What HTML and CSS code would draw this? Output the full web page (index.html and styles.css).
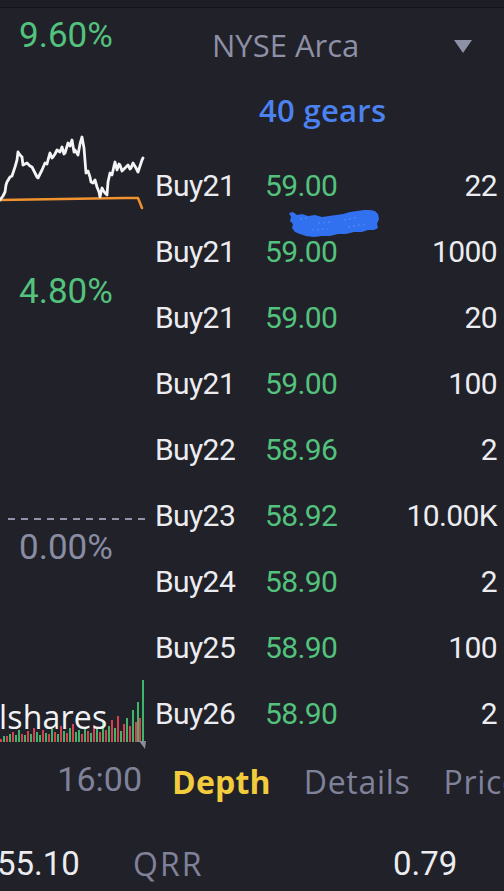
FILE: index.html
```html
<!DOCTYPE html>
<html lang="en">
<head>
<meta charset="utf-8">
<title>Depth</title>
<link rel="stylesheet" href="styles.css">
</head>
<body>
<div class="topbar"></div>
<div class="main">
  <div class="left">
    <div class="pct up first">9.60%</div>
    <svg class="spark" width="150" height="82" viewBox="0 0 150 82">
      <polyline class="avg" points="0,70 125,68 138,68 142,78"/>
      <polyline class="price" points="0,70 3,66 5,62 6,55 7,52 10,47 12,46 13,43 15,37 17,30 18,22 20,25 22,27 23,35 25,34 27,33 30,36 32,37 35,43 37,47 38,48 40,44 42,40 45,33 47,34 48,30 50,23 52,28 53,27 55,24 57,20 60,22 62,17 64,24 65,23 68,13 70,16 72,10 74,22 75,20 78,25 80,14 82,7 84,18 86,43 88,41 90,47 91,52 93,53 95,50 97,57 99,62 100,67 102,58 103,60 105,63 107,65 108,52 110,43 112,45 114,36 115,32 117,40 119,34 120,35 122,41 123,40 126,37 128,35 130,39 131,38 133,33 136,38 138,42 140,36 142,30 143,28"/>
    </svg>
    <div class="pct up second">4.80%</div>
    <div class="dash"></div>
    <div class="pct flat">0.00%</div>
    <div class="vol">
      <svg width="150" height="72" viewBox="0 0 150 72">
        <g class="r">
          <rect x="0" y="61" width="2" height="3"/><rect x="6" y="58" width="2" height="6"/><rect x="12" y="54" width="2" height="10"/>
          <rect x="21" y="56" width="2" height="8"/><rect x="27" y="53" width="2" height="11"/><rect x="33" y="50" width="2" height="14"/>
          <rect x="42" y="52" width="2" height="12"/><rect x="48" y="56" width="2" height="8"/><rect x="54" y="54" width="2" height="10"/>
          <rect x="60" y="48" width="2" height="16"/><rect x="66" y="55" width="2" height="9"/><rect x="72" y="46" width="2" height="18"/>
          <rect x="81" y="56" width="2" height="8"/><rect x="87" y="53" width="2" height="11"/><rect x="93" y="47" width="2" height="17"/>
          <rect x="99" y="54" width="2" height="10"/><rect x="105" y="52" width="2" height="12"/><rect x="111" y="42" width="2" height="22"/>
          <rect x="117" y="38" width="2" height="26"/><rect x="123" y="46" width="2" height="18"/><rect x="129" y="48" width="2" height="16"/>
          <rect x="135" y="44" width="2" height="20"/><rect x="139" y="40" width="2" height="24"/>
        </g>
        <g class="g">
          <rect x="3" y="58" width="2" height="6"/><rect x="9" y="56" width="2" height="8"/><rect x="15" y="57" width="2" height="7"/>
          <rect x="18" y="52" width="2" height="12"/><rect x="24" y="57" width="2" height="7"/><rect x="30" y="56" width="2" height="8"/>
          <rect x="36" y="54" width="2" height="10"/><rect x="39" y="57" width="2" height="7"/><rect x="45" y="55" width="2" height="9"/>
          <rect x="51" y="51" width="2" height="13"/><rect x="57" y="56" width="2" height="8"/><rect x="63" y="53" width="2" height="11"/>
          <rect x="69" y="50" width="2" height="14"/><rect x="75" y="54" width="2" height="10"/><rect x="78" y="52" width="2" height="12"/>
          <rect x="84" y="49" width="2" height="15"/><rect x="90" y="55" width="2" height="9"/><rect x="96" y="51" width="2" height="13"/>
          <rect x="102" y="44" width="2" height="20"/><rect x="108" y="48" width="2" height="16"/><rect x="114" y="50" width="2" height="14"/>
          <rect x="120" y="53" width="2" height="11"/><rect x="126" y="40" width="2" height="24"/><rect x="132" y="32" width="2" height="32"/>
          <rect x="137" y="24" width="2" height="40"/><rect x="142" y="2" width="2" height="62"/>
        </g>
        <polygon class="tip" points="139,63 146,63 145,71"/>
      </svg>
      <span class="vol-label">lshares</span>
    </div>
    <div class="time">16:00</div>
  </div>

  <div class="right">
    <div class="exch">
      <span>NYSE Arca</span>
      <svg width="18" height="13" viewBox="0 0 18 13"><polygon points="0,0 18,0 9,13"/></svg>
    </div>
    <div class="gears">40 gears</div>
    <div class="book">
      <div class="row"><span>Buy21</span><span class="px">59.00</span><span class="qty">22</span></div>
      <div class="row"><span>Buy21</span><span class="px">59.00</span><span class="qty">1000</span></div>
      <div class="row"><span>Buy21</span><span class="px">59.00</span><span class="qty">20</span></div>
      <div class="row"><span>Buy21</span><span class="px">59.00</span><span class="qty">100</span></div>
      <div class="row"><span>Buy22</span><span class="px">58.96</span><span class="qty">2</span></div>
      <div class="row"><span>Buy23</span><span class="px">58.92</span><span class="qty">10.00K</span></div>
      <div class="row"><span>Buy24</span><span class="px">58.90</span><span class="qty">2</span></div>
      <div class="row"><span>Buy25</span><span class="px">58.90</span><span class="qty">100</span></div>
      <div class="row"><span>Buy26</span><span class="px">58.90</span><span class="qty">2</span></div>
      <svg class="scribble" width="92" height="30" viewBox="0 0 92 30">
        <path d="M1,4 L5,3 L9,6 L14,5 L20,7 L27,6 L34,8 L41,7 L48,6 L55,5 L62,3 L69,2 L76,1 L82,1 L87,2 L90,5 L91,10 L89,15 L90,19 L86,21 L80,21 L74,23 L66,23 L58,25 L50,25 L42,27 L34,27 L26,28 L18,27 L12,25 L7,23 L4,19 L5,15 L2,12 L3,8 Z"/>
        <path class="spk" d="M12,10 L20,9 M30,14 L44,13 M56,11 L70,8 M60,18 L78,15 M24,21 L40,20"/>
      </svg>
    </div>
    <div class="tabs">
      <span class="tab active">Depth</span>
      <span class="tab">Details</span>
      <span class="tab">Price</span>
    </div>
  </div>
</div>
<div class="stats">
  <span class="num first-num">55.10</span>
  <span class="label">QRR</span>
  <span class="num">0.79</span>
</div>
</body>
</html>
```

FILE: styles.css
```css
html, body {
  margin: 0;
  padding: 0;
  overflow: hidden;
}
body {
  width: 504px;
  height: 891px;
  background: #202129;
  color: #ececf0;
  font-family: Roboto, "Noto Sans", sans-serif;
}
.topbar {
  height: 7px;
  background: #1d1e25;
  border-bottom: 1px solid #141519;
}
.main {
  display: flex;
  gap: 5px;
}
.left {
  width: 150px;
  flex: none;
  display: flex;
  flex-direction: column;
}
.pct {
  font-size: 35px;
  line-height: 40px;
  height: 40px;
  padding-left: 19px;
}
.up { color: #53c27c; }
.flat { color: #8a8ca2; margin-top: 8px; }
.first { margin-top: 8px; }
.second { margin-top: 60px; }
.spark {
  display: block;
  margin-top: 74px;
}
.spark polyline {
  fill: none;
  stroke-linejoin: round;
  stroke-linecap: round;
}
.spark .price { stroke: #f4f4f6; stroke-width: 2.8; }
.spark .avg { stroke: #f0922e; stroke-width: 2.5; }
.dash {
  margin-top: 206px;
  margin-left: 8px;
  width: 138px;
  height: 2px;
  background: repeating-linear-gradient(90deg, #9193aa 0 7px, transparent 7px 13px);
}
.vol {
  position: relative;
  margin-top: 110px;
  height: 72px;
}
.vol svg { display: block; }
.vol .r rect { fill: #d9404f; }
.vol .g rect { fill: #3fb56b; }
.vol .tip { fill: #8a8ca2; }
.vol-label {
  position: absolute;
  left: -1px;
  top: 19px;
  font-family: "Open Sans", sans-serif;
  font-size: 32px;
  line-height: 40px;
  letter-spacing: 0.2px;
  color: #f2f2f4;
}
.time {
  margin-top: 9px;
  height: 40px;
  line-height: 40px;
  font-size: 34px;
  color: #80829a;
  text-align: right;
  padding-right: 8px;
}
.right {
  flex: 1;
  min-width: 0;
  padding-right: 7px;
  display: flex;
  flex-direction: column;
}
.exch {
  margin-top: 17px;
  height: 40px;
  display: flex;
  align-items: center;
  justify-content: space-between;
  padding: 0 25px 0 57px;
  font-family: "Open Sans", sans-serif;
  font-size: 31px;
  color: #8e90a6;
}
.exch span { line-height: 40px; }
.exch svg { display: block; fill: #8e90a6; margin-top: 2px; }
.gears {
  margin-top: 25px;
  height: 40px;
  line-height: 40px;
  padding-left: 104px;
  font-family: "Open Sans", sans-serif;
  font-weight: 600;
  font-size: 31px;
  letter-spacing: 0.3px;
  color: #4c82f0;
}
.book {
  position: relative;
  margin-top: 23px;
}
.row {
  display: grid;
  grid-template-columns: 110px 1fr auto;
  height: 66px;
  line-height: 66px;
  font-size: 30px;
  letter-spacing: -0.6px;
  color: #ececf0;
}
.row .px { color: #53c27c; }
.row .qty { text-align: right; }
.scribble {
  position: absolute;
  left: 133px;
  top: 56px;
  fill: #3170ee;
}
.scribble .spk {
  fill: none;
  stroke: #4a86f5;
  stroke-width: 1.5;
  stroke-dasharray: 2 3;
}
.tabs {
  margin-top: 15px;
  height: 40px;
  line-height: 40px;
  display: flex;
  gap: 33px;
  padding-left: 17px;
  white-space: nowrap;
  font-family: "Open Sans", sans-serif;
  font-size: 32px;
  letter-spacing: 0.7px;
  color: #80829a;
}
.tab { flex: none; }
.tab.active {
  color: #f2cc3d;
  font-weight: 700;
  letter-spacing: 0.2px;
}
.stats {
  margin-top: 42px;
  height: 40px;
  line-height: 40px;
  display: grid;
  grid-template-columns: 133px 260px auto;
  white-space: nowrap;
}
.stats .num {
  font-size: 33px;
  color: #ececf0;
}
.stats .first-num { margin-left: -3px; }
.stats .label {
  font-family: "Open Sans", sans-serif;
  font-size: 32px;
  letter-spacing: 2px;
  color: #80829a;
}
```
